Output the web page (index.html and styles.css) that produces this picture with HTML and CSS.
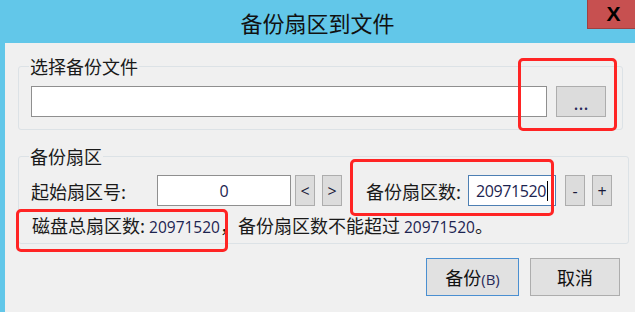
FILE: index.html
```html
<!DOCTYPE html>
<html lang="zh-CN">
<head>
    <meta charset="utf-8">
    <title>备份扇区到文件</title>
    <link rel="stylesheet" href="styles.css">
</head>
<body>
<div class="window">
    <div class="titlebar">
        <span class="title">备份扇区到文件</span>
        <div class="close-btn">X</div>
    </div>

    <div class="client">
        <fieldset class="group group-file">
            <legend>选择备份文件</legend>
            <div class="row">
                <input type="text" class="file-input" value="">
                <button class="browse-btn">...</button>
            </div>
        </fieldset>

        <fieldset class="group group-sectors">
            <legend>备份扇区</legend>
            <div class="row">
                <span class="label label-start">起始扇区号:</span>
                <input type="text" class="num-input start-input" value="0">
                <button class="small-btn">&lt;</button>
                <button class="small-btn">&gt;</button>
                <span class="label label-count">备份扇区数:</span>
                <div class="num-input count-input">20971520<span class="caret"></span></div>
                <button class="small-btn minus">-</button>
                <button class="small-btn">+</button>
            </div>
            <p class="info">磁盘总扇区数: <span class="num">20971520</span>，备份扇区数不能超过 <span class="num">20971520</span>。</p>
        </fieldset>

        <div class="actions">
            <button class="dlg-btn default">备份<span class="accel">(B)</span></button>
            <button class="dlg-btn">取消</button>
        </div>
    </div>

    <!-- 标注框 -->
    <div class="mark mark-browse"></div>
    <div class="mark mark-count"></div>
    <div class="mark mark-total"></div>
</div>
</body>
</html>
```

FILE: styles.css
```css
body {
    margin: 0;
    padding: 0;
    font-family: "Noto Sans CJK SC", "Noto Sans", sans-serif;
    font-size: 18px;
    color: #1a1a1a;
    background: #62c7e9;
}

.window {
    position: relative;
    width: 635px;
    height: 312px;
    overflow: hidden;
}

.titlebar {
    height: 43px;
    display: flex;
    justify-content: center;
    align-items: center;
}

.title {
    font-size: 22px;
    color: #111;
    margin-top: 1px;
}

.close-btn {
    position: absolute;
    top: -1px;
    right: -2px;
    width: 50px;
    height: 30px;
    background: #c75050;
    border: 1px solid #9e4141;
    box-sizing: border-box;
    display: flex;
    justify-content: center;
    align-items: center;
    font-family: "Liberation Sans", sans-serif;
    font-weight: bold;
    font-size: 21px;
    color: #000;
    padding-left: 3px;
}

.client {
    margin-left: 5px;
    height: 269px;
    background: #f0f0f0;
    padding-top: 14px;
    box-sizing: border-box;
}

.group {
    margin: 0 12px 0 13px;
    border: 1px solid #dce2e6;
    border-radius: 3px;
    padding: 11px 16px 12px 12px;
}

.group legend {
    padding: 0 1px;
    line-height: 18px;
    margin-left: -2px;
    color: #1a1a1a;
}

.group-sectors {
    margin-top: 17px;
    padding-top: 10px;
    padding-bottom: 6px;
}

.row {
    display: flex;
    align-items: center;
}

input, button {
    font-family: inherit;
    font-size: 18px;
    box-sizing: border-box;
    margin: 0;
    outline: none;
}

.file-input {
    width: 516px;
    height: 31px;
    border: 1px solid #8f8f8f;
    background: #fff;
}

.browse-btn {
    width: 50px;
    height: 31px;
    margin-left: 9px;
    background: #dcdcdc;
    border: 1px solid #adadad;
    color: #2a2a5a;
    padding: 0;
    line-height: 1;
}

.label {
    line-height: 20px;
}

.label-start {
    width: 126px;
}

.label-count {
    width: 102px;
    margin-left: 24px;
}

.num-input {
    height: 31px;
    border: 1px solid #8f8f8f;
    background: #fff;
    color: #1c2450;
    font-family: "Open Sans", sans-serif;
    font-size: 16px;
}

.start-input {
    width: 134px;
    text-align: center;
    padding: 0;
}

.count-input {
    width: 88px;
    box-sizing: border-box;
    border-color: #4d7fb3;
    display: flex;
    align-items: center;
    padding-left: 7px;
    letter-spacing: -0.4px;
}

.caret {
    display: inline-block;
    width: 1px;
    height: 20px;
    margin-left: 1px;
    background: #000;
}

.small-btn {
    width: 20px;
    height: 31px;
    margin-left: 4px;
    background: #dcdcdc;
    border: 1px solid #adadad;
    padding: 0;
    color: #1a1a3a;
    font-family: "Open Sans", sans-serif;
    font-size: 16px;
}

.small-btn + .small-btn {
    margin-left: 7px;
}

.small-btn.minus {
    margin-left: 9px;
}

.info {
    margin: 9px 0 0 1px;
    line-height: 20px;
}

.info .num {
    color: #1c2450;
    font-family: "Open Sans", sans-serif;
    font-size: 15.5px;
}

.actions {
    display: flex;
    justify-content: flex-end;
    gap: 11px;
    margin: 14px 15px 0 0;
}

.dlg-btn {
    width: 90px;
    height: 38px;
    background: #e1e1e1;
    border: 1px solid #adadad;
    color: #111;
    padding: 0;
}

.dlg-btn.default {
    width: 93px;
    border-color: #4a8fd1;
}

.accel {
    font-family: "Open Sans", sans-serif;
    font-size: 15px;
    color: #2a2a5a;
}

/* 红色标注框 */
.mark {
    position: absolute;
    border: 3px solid #ff2424;
    border-radius: 5px;
    box-sizing: border-box;
}

.mark-browse {
    left: 518px;
    top: 58px;
    width: 99px;
    height: 73px;
}

.mark-count {
    left: 350px;
    top: 159px;
    width: 204px;
    height: 57px;
}

.mark-total {
    left: 16px;
    top: 209px;
    width: 212px;
    height: 43px;
}
```
